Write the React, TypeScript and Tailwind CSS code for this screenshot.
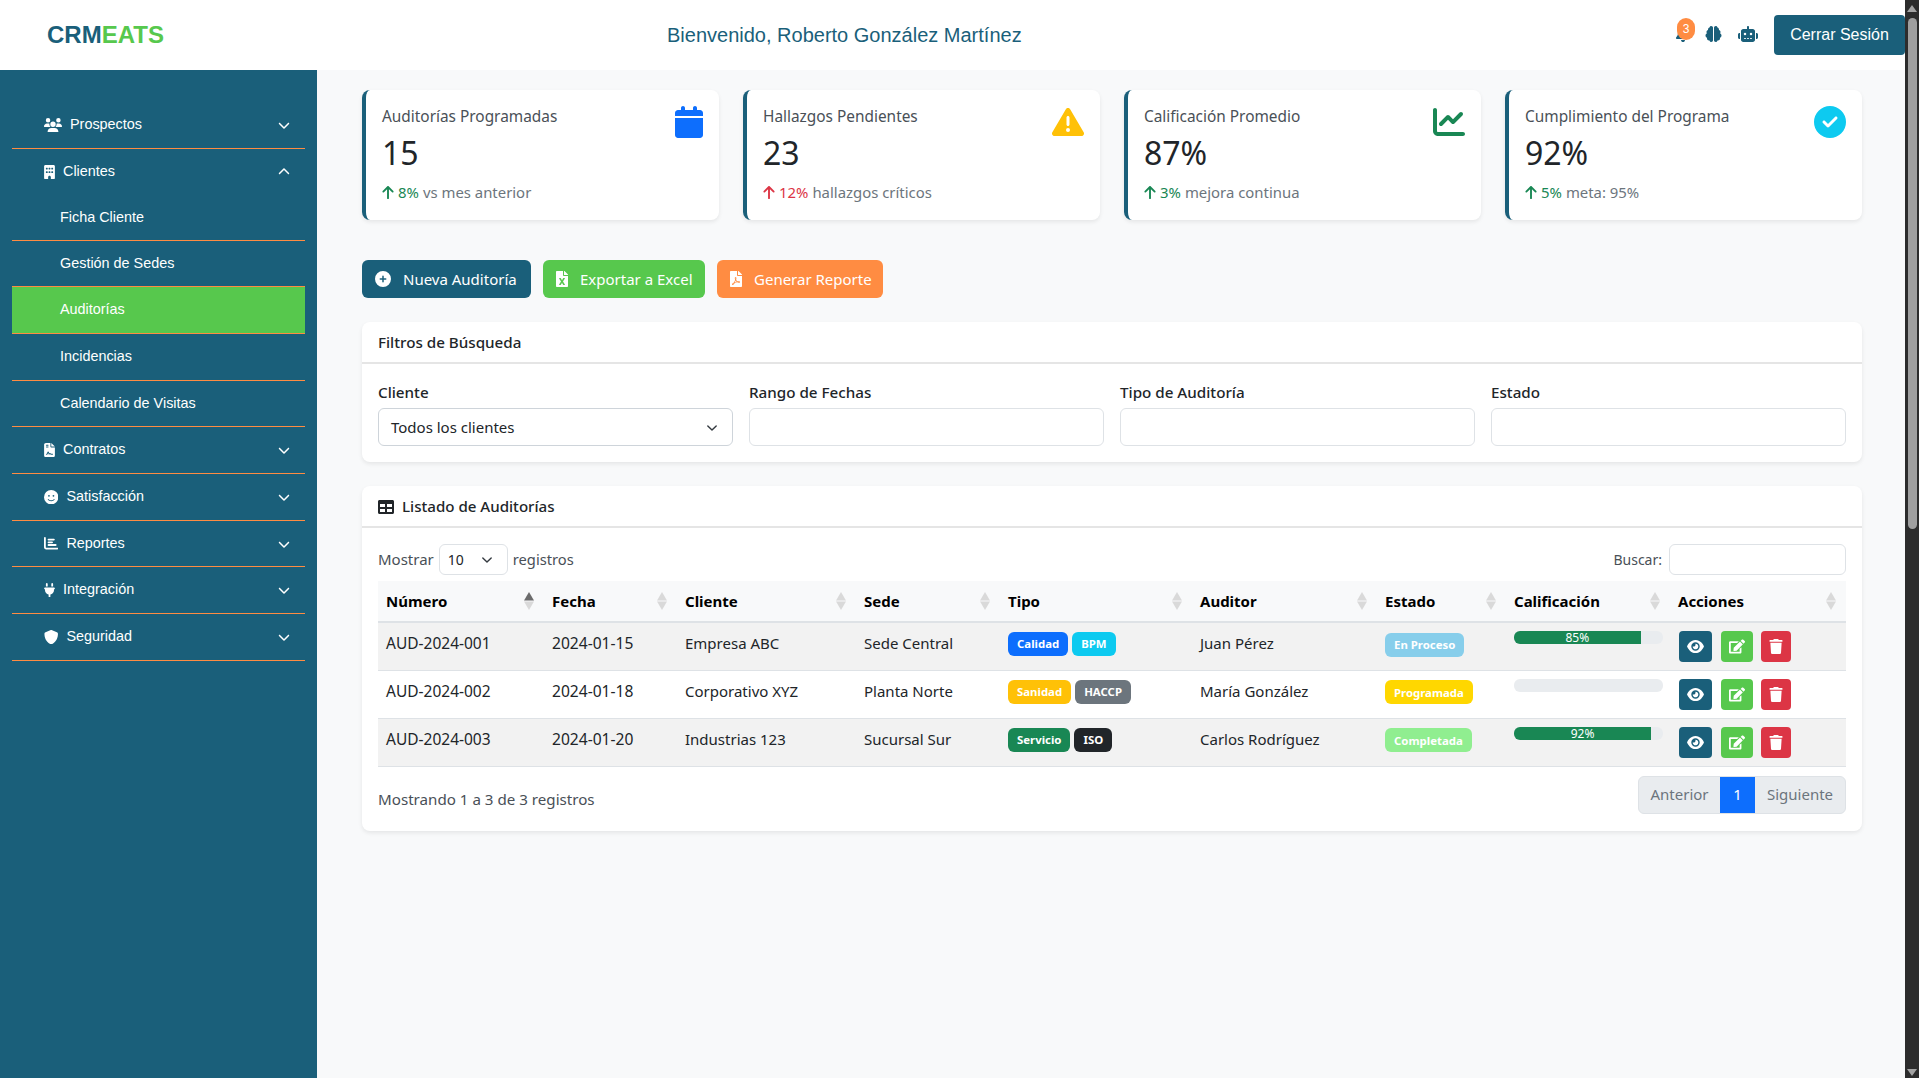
import React from 'react';
import {
  FaUsers, FaBuilding, FaFileContract, FaFaceSmile, FaChartBar, FaPlug, FaShield, FaChevronDown, FaChevronUp,
  FaCalendar, FaTriangleExclamation, FaChartLine, FaCircleCheck, FaArrowUp, FaBell, FaBrain, FaRobot,
  FaCirclePlus, FaEye, FaTrash,
} from 'react-icons/fa6';
import { FaEdit, FaTable, FaFileExcel, FaFilePdf } from 'react-icons/fa';

const body = "font-['Noto_Sans',sans-serif]";

function NavItem({ icon, label, open, active, sub, noLine, h }: any) {
  return (
    <div
      className={`flex items-center text-[14.4px] text-white ${h} ${noLine ? '' : 'border-b border-[#ff8c42]'} ${active ? 'bg-[#57c84d]' : ''} ${sub ? 'pl-[48px]' : 'pl-[32px]'}`}
    >
      {icon}
      <span className={icon ? 'ml-[8px]' : ''}>{label}</span>
      {!sub && (
        <span className="ml-auto mr-[15px] text-[12px]">
          {open ? <FaChevronUp /> : <FaChevronDown />}
        </span>
      )}
    </div>
  );
}

function Sidebar() {
  return (
    <aside className="w-[317px] shrink-0 bg-[#1a5f7a] px-[12px] pt-[32px] font-['Liberation_Sans',sans-serif]">
      <NavItem h="h-[47px]" icon={<FaUsers className="h-[14.4px] w-[18px]" />} label="Prospectos" />
      <NavItem h="h-[46px]" icon={<FaBuilding className="h-[14.4px] w-[11px]" />} label="Clientes" open noLine />
      <NavItem h="h-[46px]" sub label="Ficha Cliente" />
      <NavItem h="h-[46px]" sub label="Gestión de Sedes" />
      <NavItem h="h-[47px]" sub label="Auditorías" active />
      <NavItem h="h-[47px]" sub label="Incidencias" />
      <NavItem h="h-[46px]" sub label="Calendario de Visitas" />
      <NavItem h="h-[47px]" icon={<FaFileContract className="h-[14.4px] w-[11px]" />} label="Contratos" />
      <NavItem h="h-[47px]" icon={<FaFaceSmile className="h-[14.4px] w-[14.4px]" />} label="Satisfacción" />
      <NavItem h="h-[46px]" icon={<FaChartBar className="h-[14.4px] w-[14.4px]" />} label="Reportes" />
      <NavItem h="h-[47px]" icon={<FaPlug className="h-[14.4px] w-[11px]" />} label="Integración" />
      <NavItem h="h-[47px]" icon={<FaShield className="h-[14.4px] w-[14.4px]" />} label="Seguridad" />
    </aside>
  );
}

function Header() {
  return (
    <header className="flex h-[70px] shrink-0 items-center bg-white font-['Liberation_Sans',sans-serif] text-[#1a5f7a]">
      <div className="ml-[47px] w-[116px] text-[24px] font-bold">
        CRM<span className="text-[#57c84d]">EATS</span>
      </div>
      <div className="ml-[504px] text-[20px]">Bienvenido, Roberto González Martínez</div>
      <div className="ml-auto flex items-center">
        <div className="relative -mt-[2px] mr-[15px] text-[16px]">
          <FaBell className="w-[14px]" />
          <span className="absolute -right-[5px] -top-[8px] flex h-[22px] w-[18px] items-center justify-center rounded-full bg-[#ff8c42] text-[12px] text-white">
            3
          </span>
        </div>
        <FaBrain className="-mt-[2px] mr-[16px] h-[16px] w-[17px]" />
        <FaRobot className="-mt-[2px] mr-[16px] h-[16px] w-[20px]" />
        <button className="h-[40px] w-[131px] rounded-[4px] bg-[#1a5f7a] text-[16px] text-white">Cerrar Sesión</button>
      </div>
    </header>
  );
}

function StatCard({ title, value, icon, up, delta, note }: any) {
  return (
    <div className="relative flex h-[130px] flex-1 flex-col rounded-[8px] border-l-[4px] border-[#1a5f7a] bg-white pl-[16px] pt-[16px] shadow-[0_2px_4px_rgba(0,0,0,0.08)]">
      <div className="text-[15.4px] leading-[22px] text-[#495057]">{title}</div>
      <div className="mt-[5px] text-[32px] leading-[40px] text-[#212529]">{value}</div>
      <div className="mt-[9px] flex items-center text-[14.9px] leading-[21px] text-[#6c757d]">
        <FaArrowUp className={`mr-[4px] h-[15px] w-[12px] ${up ? 'text-[#198754]' : 'text-[#dc3545]'}`} />
        <span className={up ? 'text-[#198754]' : 'text-[#dc3545]'}>{delta}</span>
        <span className="ml-[4px]">{note}</span>
      </div>
      <div className="absolute right-[16px] top-[16px] text-[32px]">{icon}</div>
    </div>
  );
}

function ActionBtn({ color, icon, label, w }: any) {
  return (
    <button className={`flex h-[38px] items-center rounded-[6px] pl-[13px] text-[15px] text-white ${w} ${color}`}>
      {icon}
      <span>{label}</span>
    </button>
  );
}

function Field({ label, children }: any) {
  return (
    <div className="flex-1">
      <div className="mb-[4px] text-[15.2px] leading-[24px] font-medium text-[#212529]">{label}</div>
      {children}
    </div>
  );
}

function SortIcon({ active }: { active?: boolean }) {
  return (
    <svg width="10" height="18" viewBox="0 0 10 18" className="shrink-0">
      <polygon points="5,0 10,8.5 0,8.5" fill={active ? '#6b6b6b' : '#d9d9d9'} />
      <polygon points="5,18 10,9.5 0,9.5" fill="#d9d9d9" />
    </svg>
  );
}

function Badge({ color, children }: any) {
  return (
    <span className={`inline-flex h-[24px] items-center rounded-[6px] px-[9px] text-[11.4px] font-bold text-white ${color}`}>
      {children}
    </span>
  );
}

function Progress({ value }: { value?: number }) {
  return (
    <div className="h-[13px] w-[149px] rounded-[6px] bg-[#e9ecef]">
      {value ? (
        <div
          className="flex h-full items-center justify-center rounded-l-[6px] bg-[#198754] text-[12px] leading-[13px] text-white"
          style={{ width: `${value}%` }}
        >
          {value}%
        </div>
      ) : null}
    </div>
  );
}

function Actions() {
  return (
    <div className="ml-[1px] flex text-[15px] text-white">
      <button className="flex h-[31px] w-[33px] items-center justify-center rounded-[4px] bg-[#1a5f7a]"><FaEye className="h-[15px] w-[17px]" /></button>
      <button className="ml-[9px] flex h-[31px] w-[32px] items-center justify-center rounded-[4px] bg-[#57c84d]"><FaEdit className="h-[15px] w-[16px]" /></button>
      <button className="ml-[8px] flex h-[31px] w-[30px] items-center justify-center rounded-[4px] bg-[#dc3545]"><FaTrash className="h-[15px] w-[14px]" /></button>
    </div>
  );
}

const columns = [
  ['Número', 'w-[166px]'],
  ['Fecha', 'w-[133px]'],
  ['Cliente', 'w-[179px]'],
  ['Sede', 'w-[144px]'],
  ['Tipo', 'w-[192px]'],
  ['Auditor', 'w-[185px]'],
  ['Estado', 'w-[129px]'],
  ['Calificación', 'w-[164px]'],
  ['Acciones', 'w-[176px]'],
];

const rows = [
  {
    num: 'AUD-2024-001', date: '2024-01-15', client: 'Empresa ABC', site: 'Sede Central',
    tags: [['Calidad', 'bg-[#0d6efd]'], ['BPM', 'bg-[#0dcaf0]']],
    auditor: 'Juan Pérez', status: 'En Proceso', statusColor: 'bg-[#87ceeb]', score: 85,
  },
  {
    num: 'AUD-2024-002', date: '2024-01-18', client: 'Corporativo XYZ', site: 'Planta Norte',
    tags: [['Sanidad', 'bg-[#ffc107]'], ['HACCP', 'bg-[#6c757d]']],
    auditor: 'María González', status: 'Programada', statusColor: 'bg-[#ffd700]', score: 0,
  },
  {
    num: 'AUD-2024-003', date: '2024-01-20', client: 'Industrias 123', site: 'Sucursal Sur',
    tags: [['Servicio', 'bg-[#198754]'], ['ISO', 'bg-[#212529]']],
    auditor: 'Carlos Rodríguez', status: 'Completada', statusColor: 'bg-[#90ee90]', score: 92,
  },
];

function SelectBox({ label, className }: any) {
  return (
    <div className={`flex items-center justify-between rounded-[6px] border border-[#ced4da] bg-white text-[#212529] ${className}`}>
      <span>{label}</span>
      <svg width="16" height="16" viewBox="0 0 16 16" fill="none" stroke="#343a40" strokeWidth="2" strokeLinecap="round" strokeLinejoin="round">
        <path d="m2 5 6 6 6-6" transform="translate(2.4 2.4) scale(0.7)" />
      </svg>
    </div>
  );
}

function Scrollbar() {
  return (
    <div className="flex w-[14px] shrink-0 flex-col items-center bg-[#2c2c2c]">
      <div className="mt-[5px] h-0 w-0 border-x-[5px] border-b-[7px] border-x-transparent border-b-[#a3a3a3]" />
      <div className="mt-[6px] h-[511px] w-[9px] rounded-[5px] bg-[#9f9f9f]" />
      <div className="mb-[2px] mt-auto h-0 w-0 border-x-[5px] border-t-[7px] border-x-transparent border-t-[#a3a3a3]" />
    </div>
  );
}

export default function App() {
  return (
    <div className={`flex h-[1078px] w-full overflow-hidden bg-[#f8f9fa] ${body}`}>
      <div className="flex min-w-0 flex-1 flex-col">
        <Header />
        <div className="flex flex-1">
          <Sidebar />
          <main className="ml-[45px] w-[1500px] pt-[20px]">
            <div className="flex gap-[24px]">
              <StatCard title="Auditorías Programadas" value="15" up delta="8%" note="vs mes anterior" icon={<FaCalendar className="translate-x-[2px] text-[#0d6efd]" />} />
              <StatCard title="Hallazgos Pendientes" value="23" delta="12%" note="hallazgos críticos" icon={<FaTriangleExclamation className="text-[#ffc107]" />} />
              <StatCard title="Calificación Promedio" value="87%" up delta="3%" note="mejora continua" icon={<FaChartLine className="text-[#198754]" />} />
              <StatCard title="Cumplimiento del Programa" value="92%" up delta="5%" note="meta: 95%" icon={<FaCircleCheck className="text-[#0dcaf0]" />} />
            </div>

            <div className="mt-[40px] flex gap-[12px]">
              <ActionBtn w="w-[169px]" color="bg-[#1a5f7a]" label="Nueva Auditoría" icon={<FaCirclePlus className="mr-[12px] h-[16px] w-[16px]" />} />
              <ActionBtn w="w-[162px]" color="bg-[#57c84d]" label="Exportar a Excel" icon={<FaFileExcel className="mr-[12px] h-[16px] w-[12px]" />} />
              <ActionBtn w="w-[166px]" color="bg-[#ff8c42]" label="Generar Reporte" icon={<FaFilePdf className="mr-[12px] h-[16px] w-[12px]" />} />
            </div>

            <section className="mt-[24px] h-[140px] rounded-[8px] bg-white shadow-[0_2px_4px_rgba(0,0,0,0.08)]">
              <div className="flex h-[42px] items-center border-b-[2px] border-[#e5e5e5] px-[16px] pt-[1px] text-[15.2px] font-medium text-[#212529]">
                Filtros de Búsqueda
              </div>
              <div className="flex gap-[16px] px-[16px] pt-[16px]">
                <Field label="Cliente">
                  <SelectBox label="Todos los clientes" className="h-[38px] px-[12px] pt-[1px] text-[15px]" />
                </Field>
                <Field label="Rango de Fechas"><input className="h-[38px] w-full rounded-[6px] border border-[#dee2e6] bg-white" /></Field>
                <Field label="Tipo de Auditoría"><input className="h-[38px] w-full rounded-[6px] border border-[#dee2e6] bg-white" /></Field>
                <Field label="Estado"><input className="h-[38px] w-full rounded-[6px] border border-[#dee2e6] bg-white" /></Field>
              </div>
            </section>

            <section className="mt-[24px] h-[345px] rounded-[8px] bg-white px-[16px] shadow-[0_2px_4px_rgba(0,0,0,0.08)]">
              <div className="-mx-[16px] flex h-[42px] items-center border-b-[2px] border-[#e5e5e5] px-[16px] pt-[1px] text-[15.1px] font-medium text-[#212529]">
                <FaTable className="mr-[8px] text-[16px]" />
                Listado de Auditorías
              </div>
              <div className="mt-[16px] flex h-[31px] items-center text-[15px] text-[#495057]">
                <span>Mostrar</span>
                <SelectBox label="10" className="mx-[5px] h-[31px] w-[69px] border-[#dee2e6] pl-[8px] pr-[12px] text-[14px]" />
                <span className="text-[14.7px]">registros</span>
                <span className="ml-auto mr-[7px] text-[14px]">Buscar:</span>
                <input className="h-[31px] w-[177px] rounded-[6px] border border-[#dee2e6] bg-white" />
              </div>
              <table className="mt-[6px] w-[1468px] table-fixed border-collapse text-[15px] text-[#212529]">
                <thead>
                  <tr className="h-[41px] border-b-[2px] border-[#dee2e6] bg-[#f8f9fa]">
                    {columns.map(([name, w], i) => (
                      <th key={name} className={`${w} px-[8px] text-left font-bold text-black`}>
                        <div className="flex items-center justify-between pr-[2px]">
                          <span>{name}</span>
                          <SortIcon active={i === 0} />
                        </div>
                      </th>
                    ))}
                  </tr>
                </thead>
                <tbody>
                  {rows.map((r, i) => (
                    <tr key={r.num} className={`h-[48px] border-b border-[#dee2e6] align-top ${i % 2 === 0 ? 'bg-[#f2f2f2]' : 'bg-white'}`}>
                      <td className="px-[8px] pt-[8px] text-[15.5px] leading-[24px]">{r.num}</td>
                      <td className="px-[8px] pt-[8px] text-[15.6px] leading-[24px]">{r.date}</td>
                      <td className="px-[8px] pt-[8px] leading-[24px]">{r.client}</td>
                      <td className="px-[8px] pt-[8px] leading-[24px]">{r.site}</td>
                      <td className="px-[8px] pt-[9px]">
                        <div className="flex gap-[4px]">
                          {r.tags.map(([t, c]) => <Badge key={t} color={c}>{t}</Badge>)}
                        </div>
                      </td>
                      <td className="px-[8px] pt-[8px] leading-[24px]">{r.auditor}</td>
                      <td className="px-[8px] pt-[9px]"><Badge color={r.statusColor}>{r.status}</Badge></td>
                      <td className="px-[8px] pt-[8px]"><Progress value={r.score} /></td>
                      <td className="px-[8px] pt-[8px]"><Actions /></td>
                    </tr>
                  ))}
                </tbody>
              </table>
              <div className="mt-[9px] flex items-center justify-between text-[15px]">
                <span className="mt-[9px] text-[15.15px] text-[#495057]">Mostrando 1 a 3 de 3 registros</span>
                <div className="flex h-[38px] items-stretch overflow-hidden rounded-[6px] border border-[#dee2e6] bg-[#e9ecef] text-[#6c757d]">
                  <span className="flex w-[81px] items-center justify-center">Anterior</span>
                  <span className="flex w-[35px] items-center justify-center bg-[#0d6efd] text-white">1</span>
                  <span className="flex w-[90px] items-center justify-center">Siguiente</span>
                </div>
              </div>
            </section>
          </main>
        </div>
      </div>
      <Scrollbar />
    </div>
  );
}
